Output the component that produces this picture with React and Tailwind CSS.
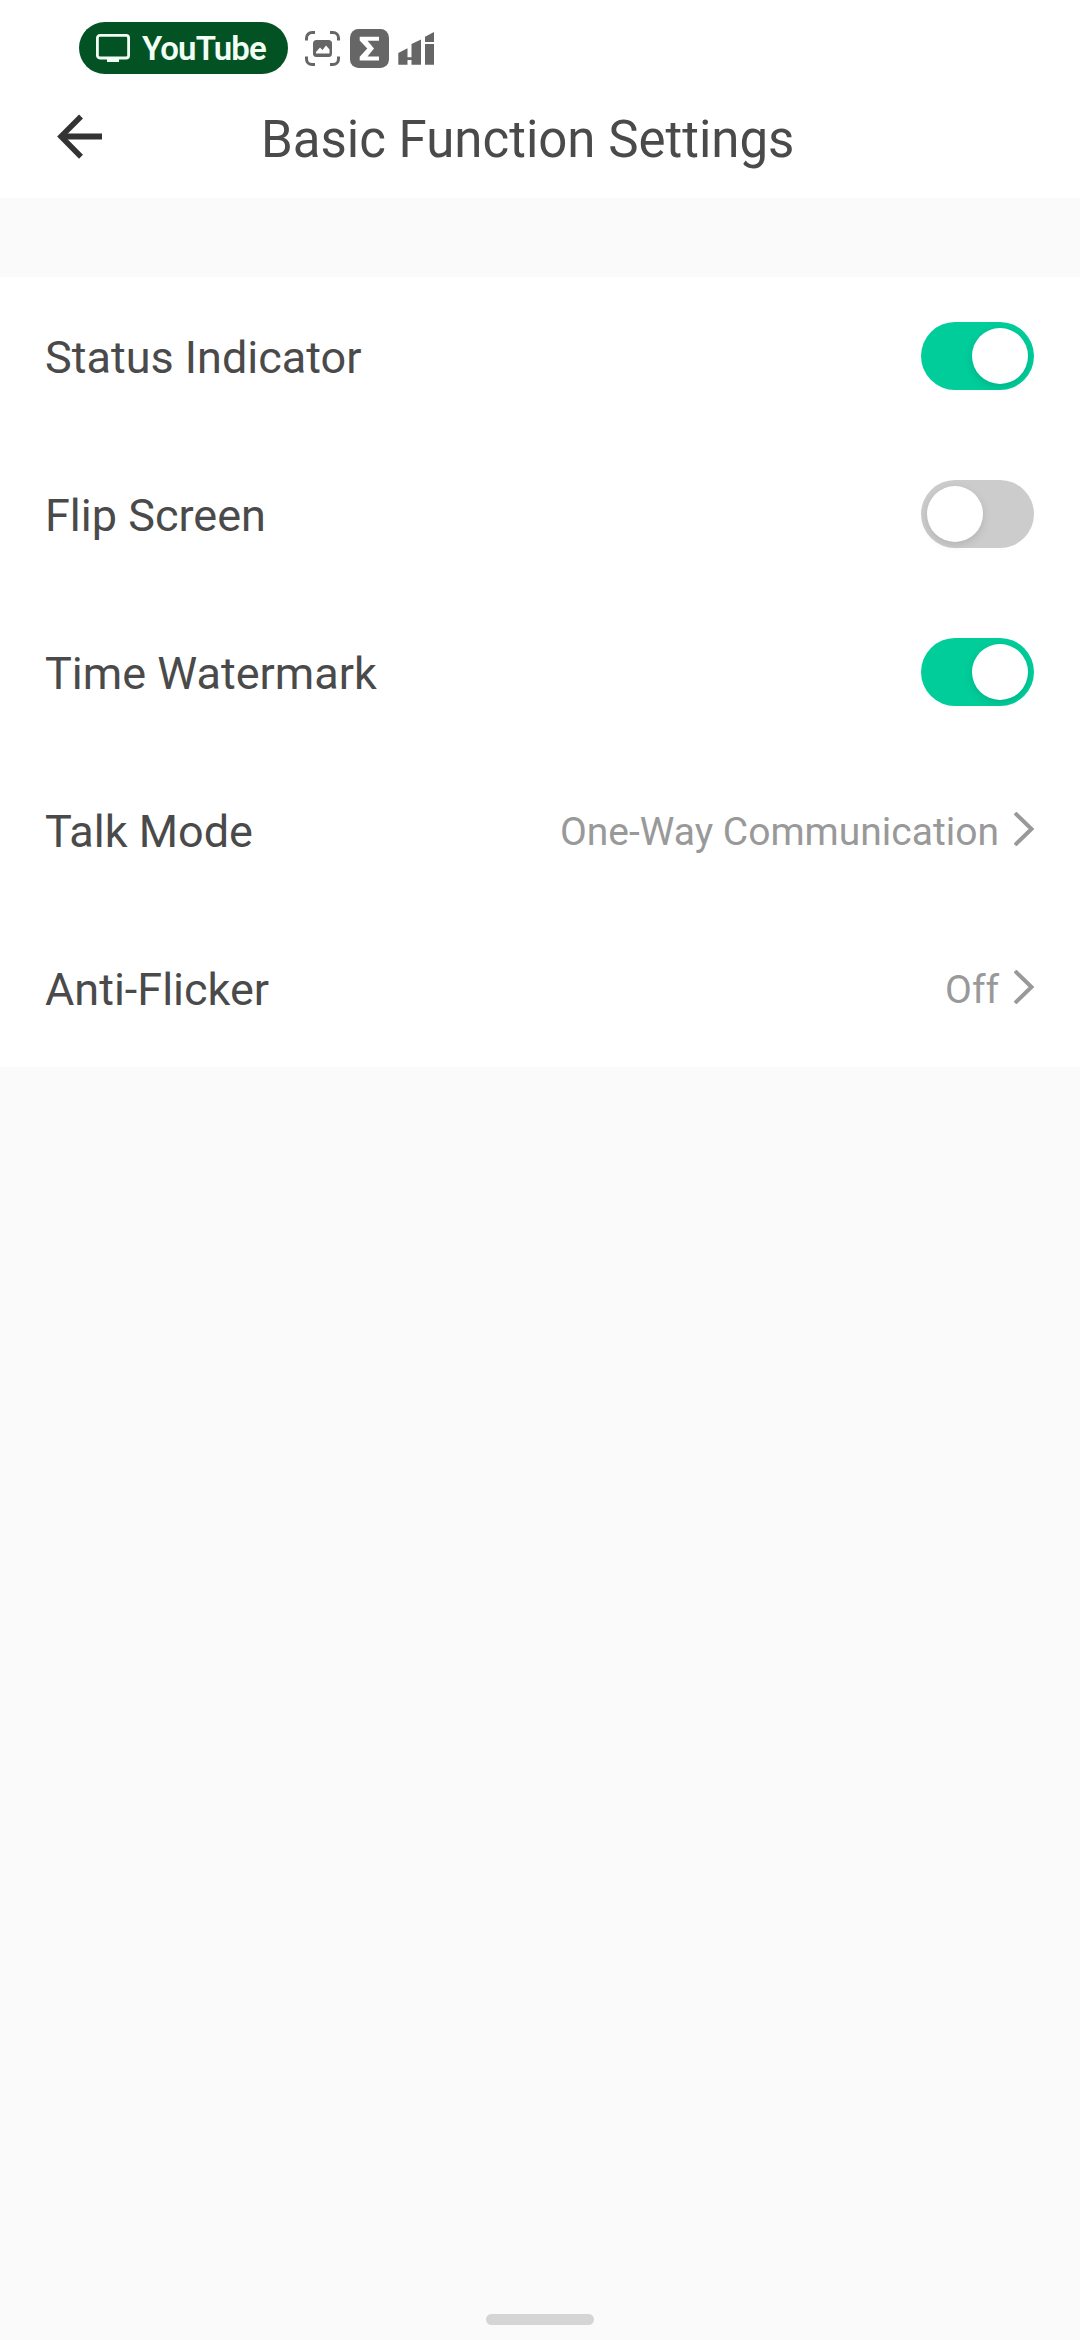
import { useState } from 'react';

function StatusBar() {
  return (
    <div className="flex h-[96px] items-center pl-[79px]">
      <div className="flex h-[52px] w-[209px] items-center rounded-full bg-[#035224] pl-[17px]">
        <svg width="34" height="28" viewBox="0 0 34 28" fill="none">
          <rect x="1.4" y="1.4" width="31.2" height="22.6" rx="2.5" stroke="#f1fff4" strokeWidth="2.8" />
          <path d="M11 23h12v5H11z" fill="#f1fff4" />
        </svg>
        <span className="ml-[12px] font-['Roboto',sans-serif] text-[33px] leading-none font-semibold tracking-[-0.9px] text-[#f1fff4]">
          YouTube
        </span>
      </div>

      <svg className="ml-[17px]" width="35" height="35" viewBox="0 0 35 35" fill="none">
        <path
          d="M1.5 9.5V7A5.5 5.5 0 0 1 7 1.5h3M25 1.5h3A5.5 5.5 0 0 1 33.5 7v2.5M33.5 25.5V28a5.5 5.5 0 0 1-5.5 5.5h-3M10 33.5H7A5.5 5.5 0 0 1 1.5 28v-2.5"
          stroke="#666"
          strokeWidth="3"
        />
        <rect x="8" y="9" width="19" height="17" rx="3.5" fill="#666" />
        <path d="M11 22.5V21l4-4.500 2.500 2.500L21 14.500l3.500 4v4z" fill="#fff" />
      </svg>

      <svg className="ml-[10px]" width="39" height="39" viewBox="0 0 39 39">
        <rect width="39" height="39" rx="8.5" fill="#666" />
        <path d="M9.7 7.700H29v4H17.500l6.500 7.700-6.500 8H29v4H9.700v-3.600l7.600-8.300-7.600-8z" fill="#fff" />
      </svg>

      <svg className="ml-[9px]" width="37" height="34" viewBox="0 0 37 34" fill="#666">
        <path d="M0.300 22L9.500 17.300v9h4V13l9.500-4.500v25.200h-9.500V29h-4v4.700H0.300z" />
        <path d="M27 5.700L36 1v10h-9zM27 13h9v20.700h-9z" />
      </svg>
    </div>
  );
}

function Header({ title }) {
  return (
    <div className="flex h-[102px] items-start">
      <button type="button" aria-label="Back" className="mt-[18px] ml-[57px]">
        <svg width="46" height="46" viewBox="0 0 46 46" fill="none" stroke="#333">
          <path d="M24 2.5L4 22.5l20 20.3" strokeWidth="5.5" />
          <path d="M4 22.5h41" strokeWidth="6" />
        </svg>
      </button>
      <h1 className="mt-[14px] ml-[158px] text-[51px] leading-[60px] whitespace-nowrap">{title}</h1>
    </div>
  );
}

function Toggle({ checked, onChange }) {
  return (
    <button
      type="button"
      role="switch"
      aria-checked={checked}
      onClick={onChange}
      className={`flex h-[68px] w-[113px] items-center rounded-full px-[6px] ${
        checked ? 'justify-end bg-[#00cd9a]' : 'justify-start bg-[#cccccc]'
      }`}
    >
      <span className="size-[56px] rounded-full bg-white shadow-[0_3px_8px_rgba(0,0,0,0.12)]" />
    </button>
  );
}

function Row({ label, children }) {
  return (
    <div className="flex h-[158px] items-center justify-between pr-[46px] pl-[45px]">
      <span className="pt-[3px] text-[45px] leading-[54px]">{label}</span>
      {children}
    </div>
  );
}

function LinkValue({ value }) {
  return (
    <div className="flex items-center text-[#999]">
      <span className="pt-[3px] text-[39px] leading-[46px]">{value}</span>
      <svg className="mr-[-1px] mb-[2px] ml-[15px]" width="21" height="34" viewBox="0 0 21 34" fill="none">
        <path d="M1 1l16.500 16L1 33" stroke="currentColor" strokeWidth="4" />
      </svg>
    </div>
  );
}

export default function App() {
  const [settings, setSettings] = useState({
    statusIndicator: true,
    flipScreen: false,
    timeWatermark: true,
  });

  const toggle = (name) => {
    setSettings({ ...settings, [name]: !settings[name] });
  };

  return (
    <div className="flex h-[2340px] w-[1080px] flex-col bg-[#fafafa] font-['Roboto',sans-serif] text-[#4a4a4a]">
      <div className="bg-white">
        <StatusBar />
        <Header title="Basic Function Settings" />
      </div>

      <div className="mt-[79px] bg-white">
        <Row label="Status Indicator">
          <Toggle checked={settings.statusIndicator} onChange={() => toggle('statusIndicator')} />
        </Row>
        <Row label="Flip Screen">
          <Toggle checked={settings.flipScreen} onChange={() => toggle('flipScreen')} />
        </Row>
        <Row label="Time Watermark">
          <Toggle checked={settings.timeWatermark} onChange={() => toggle('timeWatermark')} />
        </Row>
        <Row label="Talk Mode">
          <LinkValue value="One-Way Communication" />
        </Row>
        <Row label="Anti-Flicker">
          <LinkValue value="Off" />
        </Row>
      </div>

      {/* Gesture bar */}
      <div className="mx-auto mt-auto mb-[15px] h-[11px] w-[108px] rounded-full bg-[#d5d5d5]" />
    </div>
  );
}
